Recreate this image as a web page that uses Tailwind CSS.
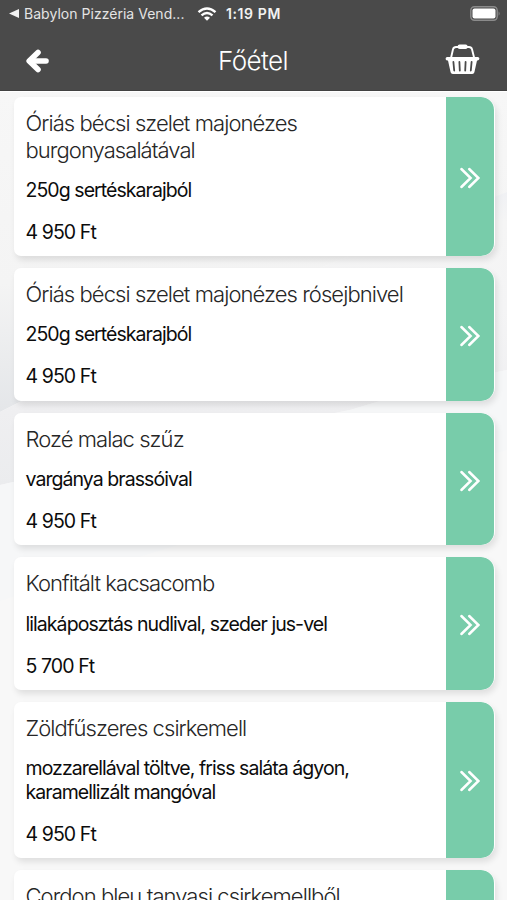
<!DOCTYPE html>
<html lang="hu">
<head>
    <meta charset="UTF-8">
    <meta name="viewport" content="width=device-width, initial-scale=1.0">
    <title>Főétel</title>
    <script src="https://cdn.jsdelivr.net/npm/@tailwindcss/browser@4"></script>
</head>
<body class="h-screen overflow-hidden bg-[#f8f8f8] font-['Inter',sans-serif] text-black">
    <div class="relative h-full flex flex-col overflow-hidden">
        <!-- Background waves -->
        <svg class="absolute inset-0 -z-10 w-full h-full" viewBox="0 0 507 900" preserveAspectRatio="none">
            <defs>
                <linearGradient id="waveTop" x1="0" y1="0" x2="0" y2="1">
                    <stop offset="0" stop-color="#f7f7f7"/>
                    <stop offset="0.6" stop-color="#f4f4f4"/>
                    <stop offset="1" stop-color="#e4e6e9"/>
                </linearGradient>
                <linearGradient id="waveMid" x1="0" y1="0" x2="0" y2="1">
                    <stop offset="0" stop-color="#f0f1f4"/>
                    <stop offset="0.1" stop-color="#f5f5f5"/>
                    <stop offset="0.4" stop-color="#f4f4f5"/>
                    <stop offset="0.75" stop-color="#efeff1"/>
                    <stop offset="1" stop-color="#ebecee"/>
                </linearGradient>
            </defs>
            <path d="M0 90H507V192Q420 225 340 260Q150 335 0 412Z" fill="url(#waveTop)"/>
            <path d="M0 412Q150 335 340 260Q420 225 507 192V370Q430 385 350 410Q200 440 0 485Z" fill="url(#waveMid)"/>
            <path d="M0 485Q200 440 350 410Q430 385 507 370V450Q250 520 0 601Z" fill="#f6f7f8"/>
        </svg>

        <!-- Header -->
        <header class="h-[91px] shrink-0 bg-[#4a4a4a] text-white border-b border-[#424242]">
            <div class="h-[27px] flex items-center pl-[9px] pr-[6px]">
                <svg class="w-[10px] h-[9px]" viewBox="0 0 10 9" fill="#f2f2f2"><path d="M0 4.5L10 0V9Z"/></svg>
                <span class="ml-[5px] w-[173px] whitespace-nowrap text-[14px] tracking-[0.03px] text-[#e4e4e4]">Babylon Pizzéria Vend...</span>
                <svg class="w-[20px] h-[14px]" viewBox="0 0 19 14" fill="none" stroke="#fff" stroke-width="2.4">
                    <path d="M1 5.1Q9.5 -2.2 18 5.1"/>
                    <path d="M4 8.4Q9.5 3.6 15 8.4"/>
                    <path d="M6.5 10.7Q9.5 8.1 12.5 10.7L9.5 13.7Z" fill="#fff" stroke="none"/>
                </svg>
                <span class="ml-[9px] whitespace-nowrap text-[14px] font-semibold tracking-[0.6px] text-[#f2f2f2]">1:19 PM</span>
                <svg class="ml-auto w-[31px] h-[15px]" viewBox="0 0 31 15">
                    <rect x="0.8" y="0.8" width="26.4" height="13.4" rx="3.6" fill="none" stroke="#8b8b8b" stroke-width="1.4"/>
                    <rect x="2.5" y="2.5" width="23" height="10" rx="2" fill="#fff"/>
                    <path d="M28.6 5.2Q30.6 7.5 28.6 9.8Z" fill="#8b8b8b"/>
                </svg>
            </div>
            <div class="h-[67px] grid grid-cols-[1fr_auto_1fr] items-center pl-[26px] pr-[27px]">
                <svg class="w-6 h-6" viewBox="0 0 24 24" fill="none" stroke="#fff" stroke-width="5.6" stroke-linecap="round">
                    <path d="M12 3.4L3.2 12L12 20.6" stroke-linejoin="round"/>
                    <path d="M4 12H20"/>
                </svg>
                <h1 class="pt-px text-[26px] font-light tracking-[-0.6px] leading-none">Főétel</h1>
                <svg class="justify-self-end w-[35px] h-8 -mt-1" viewBox="0 0 35 32">
                    <path d="M6 15L8 6.2Q8.7 4 11 4H24Q26.3 4 27 6.2L29.2 15" fill="none" stroke="#fff" stroke-width="1.9"/>
                    <rect x="12.6" y="1.4" width="10" height="4.6" rx="2" fill="#fff"/>
                    <path d="M2.2 14H32.8Q34.4 14 34.4 15.6T32.8 17.6H32L29.4 29.3Q29 31 27.2 31H7.8Q6 31 5.6 29.3L3 17.6H2.2Q0.6 17.6 0.6 15.8T2.2 14Z" fill="#fff"/>
                    <path d="M8.4 19L9.2 27.5M14.4 19L14.8 27.5M20.6 19L20.2 27.5M26.6 19L25.8 27.5" stroke="#4a4a4a" stroke-width="1.8" stroke-linecap="round"/>
                </svg>
            </div>
        </header>

        <!-- Menu list -->
        <main id="menuList" class="flex flex-col gap-3 pt-[5.2px] pl-[13.5px] pr-3 border-t border-white"></main>
    </div>

    <script>
        const meals = [
            { title: "Óriás bécsi szelet majonézes<br>burgonyasalátával", description: "250g sertéskarajból", price: "4 950 Ft" },
            { title: "Óriás bécsi szelet majonézes rósejbnivel", description: "250g sertéskarajból", price: "4 950 Ft" },
            { title: "Rozé malac szűz", description: "vargánya brassóival", price: "4 950 Ft" },
            { title: "Konfitált kacsacomb", description: "lilakáposztás nudlival, szeder jus-vel", price: "5 700 Ft" },
            { title: "Zöldfűszeres csirkemell", description: "mozzarellával töltve, friss saláta ágyon,<br>karamellizált mangóval", price: "4 950 Ft" },
            { title: "Cordon bleu tanyasi csirkemellből", description: "", price: "" }
        ];

        const menuList = document.getElementById('menuList');
        meals.forEach(meal => {
            menuList.innerHTML += `<div class="shrink-0 min-h-[132.6px] flex bg-white rounded-l-[7px] rounded-r-[14px] overflow-hidden shadow-[2px_4px_6px_rgba(0,0,0,0.1)]">
                <div class="flex-1 pl-3 pt-[12.9px] pb-[11.7px] whitespace-nowrap">
                    <h2 class="text-[22px] leading-[26.5px] font-light tracking-[-0.93px] text-[#262626]">${meal.title}</h2>
                    <p class="mt-[15.9px] text-[19.5px] leading-[23.5px] tracking-[-0.94px] text-[#0c0c0c]">${meal.description}</p>
                    <p class="mt-[18.5px] text-[19.5px] leading-[23.5px] tracking-[-0.92px] text-[#0c0c0c]">${meal.price}</p>
                </div>
                <div class="w-12 mr-px pt-[3px] rounded-r-[13px] bg-[#78ccaa] flex items-center justify-center">
                    <svg class="w-[22px] h-[22px]" viewBox="0 0 22 22" fill="none" stroke="#fff" stroke-width="2.5" stroke-linecap="round">
                        <path d="M2.4 2L11.6 11L2.4 20M10.2 2L19.4 11L10.2 20"/>
                    </svg>
                </div>
            </div>`;
        });
    </script>
</body>
</html>
